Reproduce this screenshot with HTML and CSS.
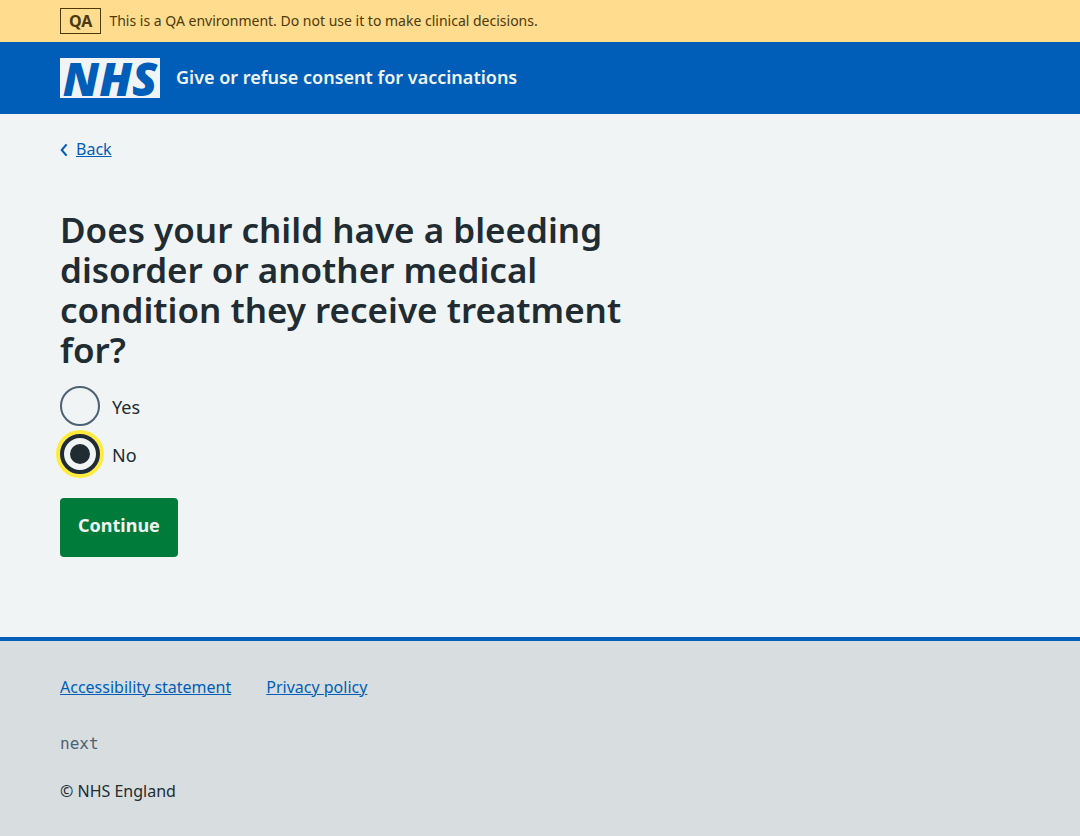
FILE: index.html
```html
<!DOCTYPE html>
<html lang="en">
<head>
<meta charset="utf-8">
<meta name="viewport" content="width=device-width, initial-scale=1">
<title>Give or refuse consent for vaccinations</title>
<link rel="stylesheet" href="styles.css">
</head>
<body class="page">
<div class="environment">
  <div class="container environment-inner">
    <strong class="environment-tag">QA</strong>
    <span>This is a QA environment. Do not use it to make clinical decisions.</span>
  </div>
</div>
<header class="header">
  <div class="container header-inner">
    <span class="logo">NHS</span>
    <span class="service-name">Give or refuse consent for vaccinations</span>
  </div>
</header>
<div class="container content">
  <a class="link back-link" href="#back"><svg class="chevron" viewBox="0 0 8 14" aria-hidden="true"><path d="M6.600 2.300 1.700 8l4.900 5.700"/></svg><span class="back-text">Back</span></a>
  <main class="main">
    <form>
      <fieldset class="fieldset">
        <legend class="legend"><h1 class="heading">Does your child have a bleeding disorder or another medical condition they receive treatment for?</h1></legend>
        <div class="radios">
          <div class="radio-row">
            <input class="radio" type="radio" name="condition" id="condition-yes" value="yes">
            <label class="radio-label" for="condition-yes">Yes</label>
          </div>
          <div class="radio-row">
            <input class="radio" type="radio" name="condition" id="condition-no" value="no" checked>
            <label class="radio-label" for="condition-no">No</label>
          </div>
        </div>
      </fieldset>
      <button class="button" type="submit">Continue</button>
    </form>
  </main>
</div>
<footer class="footer">
  <div class="container footer-inner">
    <nav class="footer-links">
      <a class="link" href="#accessibility">Accessibility statement</a>
      <a class="link" href="#privacy">Privacy policy</a>
    </nav>
    <p class="version">next</p>
    <p class="copyright">© NHS England</p>
  </div>
</footer>
</body>
</html>
```
FILE: styles.css
```css
*, *::before, *::after { box-sizing: border-box; }

.page {
  display: flex;
  flex-direction: column;
  min-height: 100vh;
  margin: 0;
  background: #f0f4f5;
  color: #212b32;
  font: 16px/24px "Noto Sans", "Open Sans", sans-serif;
}

.container {
  width: 100%;
  max-width: 1024px;
  margin: 0 auto;
  padding: 0 32px;
}

.environment {
  padding: 8px 0;
  background: #ffdc8e;
  color: #4d3a0a;
  font-size: 14px;
}
.environment-inner { display: flex; align-items: center; gap: 8px; }
.environment-tag {
  padding: 0 8px;
  border: 1px solid #4d3a0a;
  font-size: 16px;
  font-weight: 700;
}

.header { padding: 16px 0; background: #005eb8; color: #f0f4f5; }
.header-inner { display: flex; align-items: center; gap: 16px; }
.logo {
  display: flex;
  justify-content: center;
  align-items: center;
  width: 100px;
  height: 40px;
  background: #f0f4f5;
  color: #005eb8;
  font: italic 800 46px/40px "Open Sans", sans-serif;
}
.service-name { padding-bottom: 2px; font-size: 18px; font-weight: 600; }

.link { color: #005eb8; text-decoration: underline; text-decoration-thickness: 1px; text-underline-offset: 1px; }
.link:hover { color: #7c2855; }

.content { flex: 1 0 auto; padding-top: 23px; padding-bottom: 80px; }
.back-link { display: inline-flex; align-items: center; gap: 8px; text-decoration: none; }
.back-text { text-decoration: underline; text-decoration-thickness: 1px; text-underline-offset: 1px; }
.chevron { width: 8px; height: 14px; fill: none; stroke: currentColor; stroke-width: 2; }

.main { max-width: 600px; padding-top: 48px; }
.fieldset { min-width: 0; margin: 0; padding: 0; border: 0; }
.legend { padding: 0; margin-bottom: 16px; }
.heading { margin: 0; font-size: 35px; line-height: 40px; font-weight: 600; }

.radios { display: flex; flex-direction: column; gap: 8px; }
.radio-row { display: flex; align-items: center; gap: 12px; }
.radio {
  appearance: none;
  display: grid;
  place-items: center;
  width: 40px;
  height: 40px;
  margin: 0;
  border: 2px solid #4c6272;
  border-radius: 50%;
}
.radio:checked {
  border: 4px solid #212b32;
  box-shadow: 0 0 0 4px #ffeb3b;
}
.radio:checked::before {
  content: "";
  width: 20px;
  height: 20px;
  border-radius: 50%;
  background: #212b32;
}
.radio-label { padding-top: 2px; font-size: 18px; }

.button {
  margin-top: 24px;
  padding: 12px 18px 16px;
  border: 0;
  border-radius: 4px;
  background: #007b39;
  color: #f0f4f5;
  font: 700 18px/31px "Noto Sans", "Open Sans", sans-serif;
}

.footer { border-top: 4px solid #005eb8; background: #d8dde0; }
.footer-inner { padding-top: 34px; padding-bottom: 33px; }
.footer-links { display: flex; flex-wrap: wrap; gap: 8px 35px; }
.version {
  margin: 33px 0 23px;
  color: #4c6272;
  font-family: "DejaVu Sans Mono", monospace;
}
.copyright { margin: 0; }
```
